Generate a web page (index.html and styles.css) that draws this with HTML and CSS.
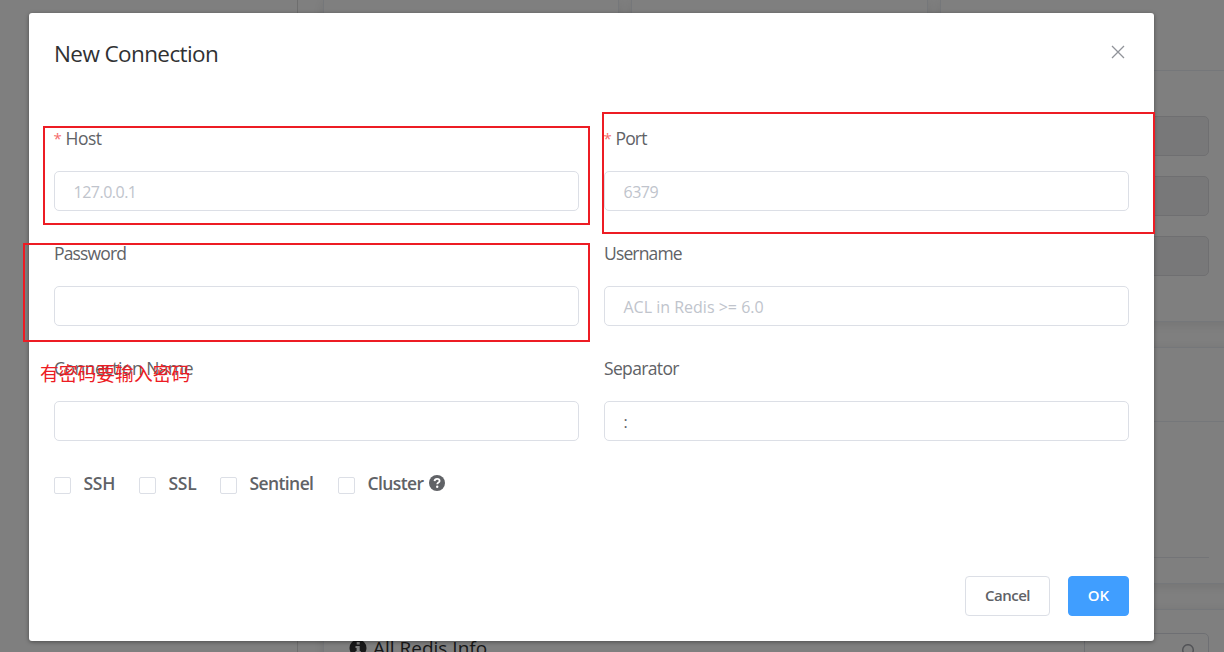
FILE: index.html
```html
<!DOCTYPE html>
<html lang="en">
<head>
<meta charset="utf-8">
<title>New Connection</title>
<link rel="stylesheet" href="styles.css">
</head>
<body>
<div class="app">
  <aside class="sidebar"></aside>
  <main class="main">
    <div class="stats">
      <section class="card"></section>
      <section class="card"></section>
      <section class="card stat-last">
        <div class="stat-head"></div>
        <div class="stat-body"><div class="tag"></div><div class="tag"></div><div class="tag"></div></div>
      </section>
    </div>
    <section class="card keys"><div class="keys-head"></div><div class="keys-table"></div></section>
    <section class="card info">
      <div class="info-title">
        <svg width="18" height="18" viewBox="0 0 18 18"><circle cx="9" cy="9" r="8.5" fill="#303133"/><path d="M7.7 3h3v2.6h-3zM6.5 7h4.2v5h1.1v2H6.5v-2h1.1V9H6.5z" fill="#fff"/></svg>
        <span class="info-text">All Redis Info</span>
      </div>
      <div class="search"><svg width="18" height="18" viewBox="0 0 18 18" fill="none" stroke="#a4a7ae" stroke-width="1.5"><circle cx="10" cy="6" r="5.3"/><path d="M14 10l3 3"/></svg></div>
    </section>
  </main>
</div>
<div class="overlay">
  <div class="dialog">
    <header class="dialog-head">
      <h1 class="title">New Connection</h1>
      <svg class="close" width="14" height="14" viewBox="0 0 14 14" fill="none" stroke="#909399" stroke-width="1.3"><path d="M1 1l12 12M13 1L1 13"/></svg>
    </header>
    <div class="form">
      <div class="field"><div class="label"><span class="star">*</span><span class="t-host">Host</span></div><div class="input hint"><span class="t-ip">127.0.0.1</span></div></div>
      <div class="field"><div class="label"><span class="star">*</span><span class="t-wide">Port</span></div><div class="input hint"><span class="t-ip">6379</span></div></div>
      <div class="field"><div class="label"><span class="t-wide">Password</span></div><div class="input"></div></div>
      <div class="field"><div class="label"><span class="t-wide">Username</span></div><div class="input hint"><span>ACL in Redis &gt;= 6.0</span></div></div>
      <div class="field"><div class="label"><span class="t-host">Connection Name</span></div><div class="input"></div></div>
      <div class="field"><div class="label"><span class="t-sep">Separator</span></div><div class="input">:</div></div>
    </div>
    <div class="checks">
      <div class="check c-ssh"><i class="box"></i><span class="t-short">SSH</span></div>
      <div class="check c-ssl"><i class="box"></i><span class="t-short">SSL</span></div>
      <div class="check c-sen"><i class="box"></i><span class="t-check">Sentinel</span></div>
      <div class="check"><i class="box"></i><span class="t-check">Cluster</span>
        <svg class="help" width="16" height="16" viewBox="0 0 16 16"><circle cx="8" cy="8" r="8" fill="#606266"/><path d="M5.5 6.1C5.7 4.5 6.8 3.8 8.1 3.8c1.5 0 2.5.8 2.5 2.1 0 1.7-2.4 1.7-2.4 3.4" fill="none" stroke="#fff" stroke-width="1.8"/><circle cx="8.2" cy="11.7" r="1.2" fill="#fff"/></svg>
      </div>
    </div>
    <footer class="actions"><button class="btn cancel">Cancel</button><button class="btn ok">OK</button></footer>
  </div>
</div>
<div class="mark mark-host"></div>
<div class="mark mark-port"></div>
<div class="mark mark-pass"></div>
<div class="note">有密码要输入密码</div>
</body>
</html>
```
FILE: styles.css
```css
* { box-sizing: border-box; }
body { margin: 0; width: 1224px; height: 652px; overflow: hidden; position: relative; background: #fff; color: #606266; font-family: "Open Sans", "Noto Sans", sans-serif; }
span { white-space: nowrap; }
.app { display: flex; height: 652px; overflow: hidden; }
.sidebar { flex: 0 0 298px; border-right: 1px solid #dcdcdc; }
.main { flex: 0 0 938px; padding-left: 25px; display: flex; flex-direction: column; gap: 25px; }
.stats { display: grid; grid-template-columns: 296px 297px 296px; gap: 12px; height: 322px; flex: none; }
.card { background: #fff; border: 1px solid #ebeef5; box-shadow: 0 2px 12px rgba(0, 0, 0, .1); }
.stats .card { border-top: 0; }
.stat-head { height: 71px; border-bottom: 1px solid #ebeef5; }
.stat-body { padding: 45px 26px 0 25px; display: flex; flex-direction: column; gap: 20px; }
.tag { height: 40px; background: #f1f1f3; border: 1px solid #dfdfe2; border-radius: 5px; }
.keys { flex: 0 0 237px; padding-right: 26px; border-radius: 5px; }
.keys-head { height: 74px; margin-right: -26px; border-bottom: 1px solid #ebeef5; }
.keys-table { height: 136px; margin-left: 25px; border-bottom: 1px solid #e6e8ee; }
.info { flex: 0 0 120px; padding: 23px 26px 0 25px; display: flex; justify-content: space-between; border-radius: 5px; }
.info-title { display: flex; align-items: center; gap: 6px; height: 30px; font-size: 19px; color: #303133; }
.search { width: 125px; height: 40px; border: 1px solid #dcdfe6; border-radius: 5px; padding: 10px 12px; text-align: right; }
.overlay { position: absolute; inset: 0; padding: 13px 0 0 29px; background: rgba(0, 0, 0, .5); }
.dialog { width: 1125px; height: 628px; padding: 25px 25px; background: #fff; border-radius: 3px; box-shadow: 0 1px 4px rgba(0, 0, 0, .4); display: flex; flex-direction: column; }
.dialog-head { height: 76px; display: flex; justify-content: space-between; align-items: flex-start; }
.title { margin: 0; font-size: 22.5px; line-height: 31px; font-weight: 400; letter-spacing: -.6px; color: #303133; }
.close { margin: 7px 4px 0 0; }
.form { display: grid; grid-template-columns: 525px 525px; column-gap: 25px; }
.field { height: 115px; }
.label { height: 57px; line-height: 48px; font-size: 17.5px; display: flex; }
.star { color: #f56c6c; width: 12px; font-size: 15px; margin: 0 0 0 -.5px; }
.t-host { letter-spacing: -.5px; }
.t-wide { letter-spacing: -.85px; }
.t-sep { letter-spacing: -.65px; }
.t-ip { letter-spacing: -.5px; }
.input { height: 40px; border: 1px solid #dcdfe6; border-radius: 5px; padding: 1px 18.5px 0; line-height: 39px; font-size: 16px; }
.hint { color: #c0c4cc; }
.checks { display: flex; height: 49px; align-items: center; font-size: 17.5px; line-height: 24px; font-weight: 600; }
.check { display: flex; align-items: center; }
.check span { margin-top: -1px; }
.c-ssh { width: 85px; }
.c-ssl { width: 81px; }
.c-sen { width: 118px; }
.box { width: 17px; height: 17px; margin: 3px 12.5px 0 0; border: 1px solid #dcdfe6; border-radius: 2px; flex: none; }
.t-short { letter-spacing: -.3px; }
.t-check { letter-spacing: -.6px; }
.help { margin: -2px 0 0 6px; }
.actions { margin-top: auto; display: flex; justify-content: flex-end; gap: 18px; }
.btn { height: 40px; padding: 0 0 2px; border-radius: 4px; font: 600 15px "Open Sans", sans-serif; }
.cancel { width: 85px; background: #fff; color: #606266; border: 1px solid #dcdfe6; letter-spacing: -.5px; }
.ok { width: 61px; background: #409eff; color: #fff; border: 1px solid #409eff; }
.mark { position: absolute; border: 2px solid #ed1c24; }
.mark-host { left: 43px; top: 126px; width: 547px; height: 99px; }
.mark-port { left: 602px; top: 112px; width: 553px; height: 122px; }
.mark-pass { left: 23px; top: 243px; width: 567px; height: 99px; }
.note { position: absolute; left: 40px; top: 359px; font: 18.8px/28px "Noto Sans CJK SC", sans-serif; color: #ed1c24; white-space: nowrap; }
```
